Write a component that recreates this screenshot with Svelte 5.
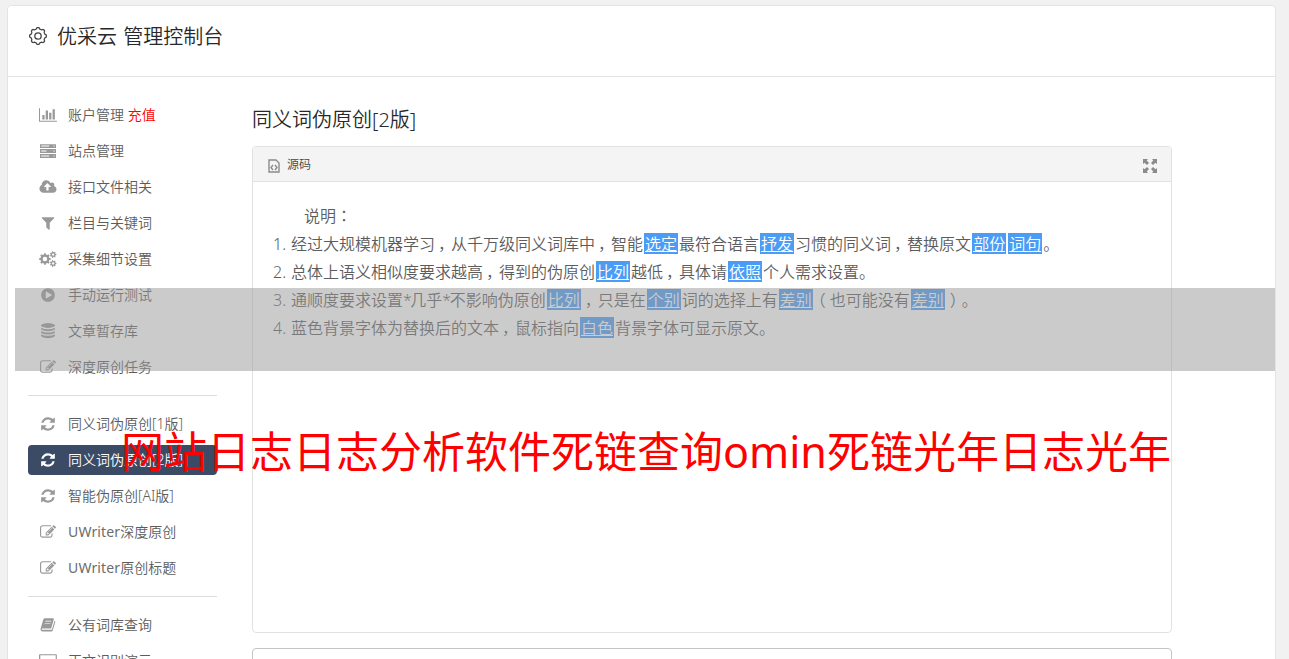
<script>
  const groups = [
    [
      { icon: "chart", label: "账户管理", extra: "充值" },
      { icon: "server", label: "站点管理" },
      { icon: "cloud", label: "接口文件相关" },
      { icon: "filter", label: "栏目与关键词" },
      { icon: "cogs", label: "采集细节设置" },
      { icon: "play", label: "手动运行测试" },
      { icon: "database", label: "文章暂存库" },
      { icon: "edit", label: "深度原创任务" },
    ],
    [
      { icon: "refresh", label: "同义词伪原创[1版]" },
      { icon: "refresh", label: "同义词伪原创[2版]", active: true },
      { icon: "refresh", label: "智能伪原创[AI版]" },
      { icon: "edit", label: "深度原创", prefix: "UWriter" },
      { icon: "edit", label: "原创标题", prefix: "UWriter" },
    ],
    [
      { icon: "book", label: "公有词库查询" },
      { icon: "desktop", label: "正文识别演示" },
    ],
  ];

  // words between braces are the replaced synonyms
  const notes = [
    "经过大规模机器学习，从千万级同义词库中，智能{选定}最符合语言{抒发}习惯的同义词，替换原文{部份}{词句}。",
    "总体上语义相似度要求越高，得到的伪原创{比列}越低，具体请{依照}个人需求设置。",
    "通顺度要求设置*几乎*不影响伪原创{比列}，只是在{个别}词的选择上有{差别}（也可能没有{差别}）。",
    "蓝色背景字体为替换后的文本，鼠标指向{白色}背景字体可显示原文。",
  ];

  const punctClass = { "，": "comma", "（": "open", "）": "close", "*": "star" };
  const split = (text) => text.split(/(\{.*?\}|[，（）*])/).filter(Boolean);

  const icons = {
    chart: {
      w: 2048,
      d: "M640 896v512h-256v-512h256zm384-512v1024h-256v-1024h256zm1024 1152v128h-2048v-1536h128v1408h1920zm-640-896v768h-256v-768h256zm384-384v1152h-256v-1152h256z",
    },
    server: {
      w: 1792,
      d: "M0 128h1792v440h-1792zM128 270v130h900v-130zM1500 270v130h128v-130zM0 680h1792v440h-1792zM128 830v130h600v-130zM1500 830v130h128v-130zM0 1232h1792v440h-1792zM128 1390v130h900v-130zM1500 1390v130h128v-130z",
    },
    cloud: {
      w: 2048,
      d: "M1344 864q0-14-9-23l-352-352q-9-9-23-9t-23 9l-351 351q-10 12-10 24 0 14 9 23t23 9h224v352q0 13 9.5 22.5t22.5 9.5h192q13 0 22.5-9.5t9.5-22.5v-352h224q13 0 22.5-9.5t9.5-22.5zm640 288q0 159-112.5 271.5t-271.5 112.5h-1088q-185 0-316.5-131.5t-131.5-316.5q0-130 70-240t188-165q-2-30-2-43 0-212 150-362t362-150q156 0 285.5 87t188.5 231q71-62 166-62 106 0 181 75t75 181q0 76-41 138 130 31 213.5 135.5t83.5 238.5z",
    },
    filter: {
      w: 1792,
      d: "M1595 295q17 41-14 70l-493 493v742q0 42-39 59-13 5-25 5-27 0-45-19l-256-256q-19-19-19-45v-486l-493-493q-31-29-14-70 17-39 59-39h1280q42 0 59 39z",
    },
    cogs: {
      w: 2048,
      d: gear(680, 896, 660, 510, 250, 8) + gear(1600, 400, 380, 280, 130, 7) + gear(1600, 1400, 380, 280, 130, 7),
    },
    play: {
      w: 1792,
      d: "M896 128q209 0 385.5 103t279.5 279.5 103 385.5-103 385.5-279.5 279.5-385.5 103-385.5-103-279.5-279.5-103-385.5 103-385.5 279.5-279.5 385.5-103zm384 823q32-18 32-55t-32-55l-544-320q-31-19-64-1-32 19-32 56v640q0 37 32 56 16 8 32 8 17 0 32-9z",
    },
    database: {
      w: 1792,
      d: "M896 0q420 0 768 190v180q-348 200-768 200t-768-200v-180q348-190 768-190zM128 520q300 180 768 180t768-180v220q-300 190-768 190t-768-190zM128 890q300 180 768 180t768-180v220q-300 190-768 190t-768-190zM128 1260q300 180 768 180t768-180v230q-300 210-768 210t-768-210z",
    },
    edit: {
      w: 1792,
      d: "M888 1184l116-116-152-152-116 116v56h96v96h56zm440-720q-16-16-33 1l-350 350q-17 17-1 33t33-1l350-350q17-17 1-33zm80 594v190q0 119-84.5 203.5t-203.5 84.5h-832q-119 0-203.5-84.5t-84.5-203.5v-832q0-119 84.5-203.5t203.5-84.5h832q63 0 117 25 15 7 18 23 3 17-9 29l-49 49q-14 14-32 8-23-6-45-6h-832q-66 0-113 47t-47 113v832q0 66 47 113t113 47h832q66 0 113-47t47-113v-126q0-13 9-22l64-64q15-15 35-7t20 29zm-96-738l288 288-672 672h-288v-288zm444 132l-92 92-288-288 92-92q28-28 68-28t68 28l152 152q28 28 28 68t-28 68z",
    },
    refresh: {
      w: 1792,
      d: "M1639 1056q0 5-1 7-64 268-268 434.5t-478 166.5q-146 0-282.5-55t-243.5-157l-129 129q-19 19-45 19t-45-19-19-45v-448q0-26 19-45t45-19h448q26 0 45 19t19 45-19 45l-137 137q71 66 161 102t187 36q134 0 250-65t186-179q11-17 53-117 8-23 30-23h192q13 0 22.5 9.5t9.5 22.5zm25-800v448q0 26-19 45t-45 19h-448q-26 0-45-19t-19-45 19-45l138-138q-148-137-349-137-134 0-250 65t-186 179q-11 17-53 117-8 23-30 23h-199q-13 0-22.5-9.5t-9.5-22.5v-7q65-268 270-434.5t480-166.5q146 0 284 55.5t245 156.5l130-129q19-19 45-19t45 19 19 45z",
    },
    book: {
      w: 1792,
      d: "M500 128h970q110 20 80 130l-290 960q-20 70-100 70h-910q-80 10-60 90 20 60 110 60h960q60 0 80-60l300-960q100 50 70 150l-290 940q-30 120-150 120h-980q-170 0-220-160-30-90 0-180l290-980q40-160 140-180zM620 420l-25 80h650l25-80zM540 660l-25 80h650l25-80z",
    },
    desktop: {
      w: 2048,
      d: "M160 128h1728q160 0 160 160v1088q0 160-160 160h-600v130h160v100h-848v-100h160v-130h-600q-160 0-160-160v-1088q0-160 160-160zM160 256v1000h1728v-1000z",
    },
  };

  function gear(cx, cy, outer, inner, hole, teeth) {
    const points = [];
    for (let i = 0; i < teeth; i++) {
      for (const [offset, r] of [[-0.3, inner], [-0.17, outer], [0.17, outer], [0.3, inner]]) {
        const a = ((i + offset) / teeth) * Math.PI * 2;
        points.push(`${(cx + r * Math.cos(a)).toFixed(0)} ${(cy + r * Math.sin(a)).toFixed(0)}`);
      }
    }
    return `M${points.join("L")}zM${cx - hole} ${cy}a${hole} ${hole} 0 1 0 ${hole * 2} 0a${hole} ${hole} 0 1 0 ${-hole * 2} 0z`;
  }

  function scallop(c, r, depth, lobes) {
    const points = [];
    for (let i = 0; i < 96; i++) {
      const a = (i / 96) * Math.PI * 2;
      const d = r + depth * Math.tanh(2 * Math.cos(lobes * a));
      points.push(`${(c + d * Math.sin(a)).toFixed(2)} ${(c - d * Math.cos(a)).toFixed(2)}`);
    }
    return `M${points.join("L")}z`;
  }
</script>

<div class="page">
  <div class="container">
    <header>
      <svg class="gear" viewBox="0 0 20 20">
        <path d={scallop(10, 7.7, 0.7, 8)} />
        <circle cx="10" cy="10" r="3.2" />
      </svg>
      <h1>优采云 管理控制台</h1>
    </header>

    <div class="body">
      <nav>
        {#each groups as group}
          <ul>
            {#each group as item}
              <li class:active={item.active}>
                <svg class="icon" viewBox="0 0 {icons[item.icon].w} 1792" style="width: {(icons[item.icon].w / 1792) * 16}px">
                  <path fill-rule="evenodd" d={icons[item.icon].d} />
                </svg>
                <span>{#if item.prefix}<b>{item.prefix}</b>{/if}{item.label}{#if item.extra}&nbsp;<em>{item.extra}</em>{/if}</span>
              </li>
            {/each}
          </ul>
        {/each}
      </nav>

      <main>
        <h2>同义词伪原创[2版]</h2>

        <section class="editor">
          <div class="toolbar">
            <svg class="source" viewBox="0 0 12 14">
              <path d="M1 1h7l3 3v9H1z" />
              <path d="M5 6L3 8.5L5 11M7 6L9 8.5L7 11" />
            </svg>
            <span>源码</span>
            <svg class="expand" viewBox="0 0 14 14">
              <path d="M0 0h5L3.7 1.5L6 4L4 6L1.5 3.7L0 5zM14 0v5L12.5 3.7L10 6L8 4L10.3 1.5L9 0zM0 14v-5L1.5 10.3L4 8L6 10L3.7 12.5L5 14zM14 14h-5L10.3 12.5L8 10L10 8L12.5 10.3L14 9z" />
            </svg>
          </div>
          <div class="content">
            <p>说明<span class="colon">：</span></p>
            <ol>
              {#each notes as note, i}
                <li>
                  <span class="num">{i + 1}.</span>
                  <span>{#each split(note) as part}{#if part[0] === "{"}<mark>{part.slice(1, -1)}</mark>{:else if punctClass[part]}<span class={punctClass[part]}>{part}</span>{:else}{part}{/if}{/each}</span>
                </li>
              {/each}
            </ol>
          </div>
        </section>

        <section class="result"></section>
      </main>
    </div>
  </div>
</div>

<div class="band"></div>
<div class="caption">网站日志日志分析软件死链查询omin死链光年日志光年</div>

<style>
  :global(body) {
    background: #f1f1f1;
  }

  .page,
  .caption {
    font-family: "Noto Sans", "Noto Sans CJK SC", sans-serif;
  }

  .page {
    box-sizing: border-box;
    height: 100vh;
    padding: 5px 0 0 7px;
    overflow: hidden;
  }

  .container {
    box-sizing: border-box;
    width: 1269px;
    height: 720px;
    border: 1px solid #e4e4e4;
    border-radius: 4px;
    background: #fff;
    color: #5c5c5c;
    font-size: 14px;
    font-weight: 350;
    text-spacing-trim: space-all;
  }

  header {
    display: flex;
    align-items: center;
    height: 71px;
    box-sizing: border-box;
    padding: 0 0 8px 20px;
    border-bottom: 1px solid #e4e4e4;
    color: #333;
  }

  .gear {
    width: 20px;
    height: 20px;
    margin-top: -3px;
    fill: none;
    stroke: #444;
    stroke-width: 1.3;
  }

  h1,
  h2 {
    margin: 0;
    color: #282828;
    font-size: 20px;
    font-weight: 350;
    line-height: 28px;
    white-space: nowrap;
  }

  h1 {
    margin-left: 9px;
    word-spacing: 1px;
  }

  .body {
    display: flex;
    padding: 23px 0 0 20px;
  }

  nav {
    width: 189px;
    margin-right: 35px;
  }

  ul,
  ol {
    margin: 0;
    padding: 0;
    list-style: none;
  }

  ul + ul {
    margin-top: 13px;
    padding-top: 13px;
    border-top: 1px solid #ddd;
  }

  nav li {
    display: flex;
    align-items: center;
    height: 30px;
    padding-left: 40px;
    border-radius: 4px;
    line-height: 30px;
    white-space: nowrap;
  }

  nav li + li {
    margin-top: 6px;
  }

  .icon {
    flex: none;
    height: 16px;
    margin-left: -20px;
    transform: translateX(-50%);
    fill: #999;
  }

  .icon + span {
    flex: none;
    margin-left: auto;
    width: 149px;
  }

  .active {
    background: #3b4b66;
    color: #fff;
  }

  .active .icon {
    fill: #fff;
  }

  b {
    color: #6c6c6c;
    font-weight: 400;
    letter-spacing: 0.15px;
  }

  em {
    color: #f00;
    font-style: normal;
  }

  main {
    width: 920px;
    padding-top: 6px;
  }

  .editor {
    box-sizing: border-box;
    height: 487px;
    margin-top: 12px;
    border: 1px solid #e2e2e2;
    border-radius: 4px;
  }

  .toolbar {
    display: flex;
    align-items: center;
    height: 34px;
    padding: 0 14px 0 15px;
    border-bottom: 1px solid #e2e2e2;
    border-radius: 3px 3px 0 0;
    background: #f4f4f4;
    color: #444;
    font-size: 12px;
  }

  .source {
    width: 12px;
    height: 14px;
    margin: 4px 7px 0 0;
    fill: none;
    stroke: #8b8b8b;
    stroke-width: 1.4;
  }

  .expand {
    width: 14px;
    height: 14px;
    margin: 4px 0 0 auto;
    fill: #8b8b8b;
  }

  .content {
    padding: 20px;
    font-size: 16px;
    line-height: 28px;
    white-space: nowrap;
  }

  p {
    margin: 0;
    padding-left: 31px;
  }

  .content li {
    display: flex;
    height: 28px;
  }

  .num {
    width: 18px;
  }

  .colon {
    font-family: "Noto Sans CJK TC", sans-serif;
    line-height: 1;
  }

  .comma,
  .open,
  .close {
    display: inline-block;
    width: 16px;
    text-indent: 3px;
  }

  .open {
    text-indent: -4px;
  }

  .close {
    text-indent: 4px;
  }

  .star {
    letter-spacing: -1.5px;
  }

  mark {
    display: inline-block;
    height: 21px;
    margin: 0 1px;
    padding: 0 1px;
    background: #4a9cf4;
    color: #fff;
    line-height: 22px;
    text-decoration: underline;
  }

  .result {
    height: 80px;
    margin-top: 15px;
    border: 1px solid #c4c4c4;
    border-radius: 4px 4px 0 0;
  }

  .band {
    position: absolute;
    top: 288px;
    left: 15px;
    width: 1260px;
    height: 83px;
    background: rgba(151, 151, 151, 0.5);
  }

  .caption {
    position: absolute;
    top: 422px;
    left: 121px;
    color: #f00;
    font-size: 43px;
    line-height: 60px;
    white-space: nowrap;
  }
</style>
